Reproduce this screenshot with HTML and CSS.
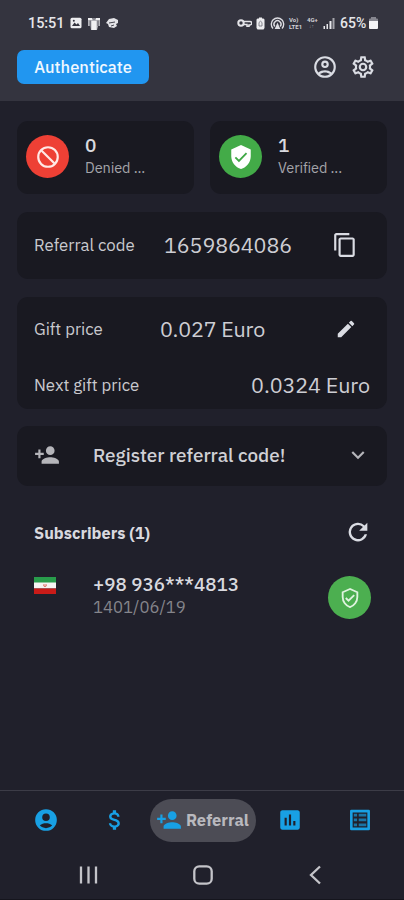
FILE: index.html
```html
<!DOCTYPE html>
<html lang="en">
<head>
<meta charset="utf-8">
<title>Referral</title>
<link rel="stylesheet" href="styles.css">
</head>
<body>
<div class="app">
  <header class="top">
    <div class="status">
      <span class="clock">15:51</span>
      <svg class="st-image" width="12" height="12" viewBox="0 0 12 12"><rect x=".5" y=".8" width="11" height="10.4" rx="1.5" fill="#ededf0"/><path d="M2 9l2.500-3.500 2 2L8 6l2 3z" fill="#33333e"/><circle cx="3.800" cy="3.800" r="1" fill="#33333e"/></svg>
      <svg class="st-shirt" width="14" height="13" viewBox="0 0 14 13"><path d="M1 1h12v8h-2l-1 4H4L3.500 9H1z" fill="#b4b4ba"/><path d="M4.500 4h5v9h-5zM1 1h4v2H1zM9 1h4v2H9z" fill="#f0f0f2"/><path d="M3.200 3.500V9M11 3.500V9M5.500 1L7 2.500 8.500 1" stroke="#50505a" stroke-width=".9" fill="none"/></svg>
      <svg class="st-ball" width="13" height="12" viewBox="0 0 13 12"><path d="M3 2l5-1 4 2v3l-2 1 1 2-3 2-5-1-1-3-2-1z" fill="#e4e4e8"/><path d="M3 6l6-1M5 9l3-1" stroke="#44444e" fill="none"/></svg>
      <span class="spacer"></span>
      <svg class="st-key" width="15" height="10" viewBox="0 0 15 10"><circle cx="4" cy="5" r="2.700" fill="none" stroke="#e4e4e8" stroke-width="2"/><path d="M6.500 3.500h6.500a1.200 1.200 0 0 1 0 3.400h-1v1.300h-2V6.500H7" fill="none" stroke="#e4e4e8" stroke-width="1.500"/></svg>
      <svg class="st-card" width="9" height="13" viewBox="0 0 9 13"><path d="M3 .5h3v1h1.500l1 1V11L7.500 12.500h-6L.5 11V2.500l1-1H3z" fill="#ededf0"/><path d="M3 9V5.500l1.500-1.300L6 5.500V9z" fill="none" stroke="#6a6a75" stroke-width=".8"/></svg>
      <svg class="st-hot" width="15" height="13" viewBox="0 0 15 13"><g fill="none" stroke="#dcdce2" stroke-width="1.400"><path d="M3 11.500a6.200 6.200 0 1 1 9 0"/><path d="M4.800 9.500a3.500 3.500 0 1 1 5.400 0"/></g><path d="M7.500 5.500l2.800 6.500H4.700z" fill="#dcdce2"/></svg>
      <span class="mini volte"><span>Vo)</span><span>LTE1</span></span>
      <span class="mini net"><span>4G+</span><span class="arrows">↓↑</span></span>
      <svg class="st-signal" width="12" height="12" viewBox="0 0 12 12"><path d="M.5 9h1.500v3H.5zM3.500 7H5v5H3.500zM6.500 4h2v8h-2z" fill="#e8e8ec"/><path d="M9.500 1h2v11h-2z" fill="#a4a4ab"/></svg>
      <span class="battery-text">65%</span>
      <svg class="st-batt" width="9" height="12" viewBox="0 0 9 12"><path d="M2 0h5v1.500h1q1 0 1 1V4H0V2.500q0-1 1-1h1z" fill="#86868f"/><path d="M0 4h9v7q0 1-1 1H1q-1 0-1-1z" fill="#f4f4f6"/></svg>
    </div>
    <div class="toolbar">
      <button class="auth">Authenticate</button>
      <span class="spacer"></span>
      <svg class="ic" width="26" height="26" viewBox="0 0 24 24"><path fill-rule="evenodd" d="M12 2a10 10 0 1 0 0 20 10 10 0 0 0 0-20zM7.350 18.500C8.660 17.560 10.260 17 12 17s3.340.56 4.650 1.500A7.960 7.960 0 0 1 12 20c-1.740 0-3.340-.56-4.650-1.500zm10.790-1.380A9.950 9.950 0 0 0 12 15c-2.320 0-4.450.8-6.140 2.120A8 8 0 1 1 20 12c0 1.950-.7 3.730-1.860 5.120zM12 6a3.500 3.500 0 1 0 0 7 3.500 3.500 0 0 0 0-7zm0 5a1.500 1.500 0 1 1 0-3 1.500 1.500 0 0 1 0 3z"/></svg>
      <svg class="ic gear" width="26" height="26" viewBox="0 0 24 24"><path d="M19.430 12.980c.04-.32.070-.64.070-.98s-.03-.66-.07-.98l2.110-1.650c.19-.15.240-.42.120-.64l-2-3.460a.5.5 0 0 0-.61-.22l-2.490 1a7.300 7.300 0 0 0-1.690-.98l-.38-2.650A.49.49 0 0 0 14 2h-4a.49.49 0 0 0-.49.420l-.38 2.650c-.61.250-1.170.59-1.690.98l-2.490-1a.5.5 0 0 0-.61.220l-2 3.460c-.13.220-.07.490.12.640l2.110 1.650c-.04.320-.07.650-.07.980s.03.660.07.980l-2.110 1.650c-.19.150-.24.420-.12.640l2 3.460c.12.220.38.300.61.220l2.490-1c.52.400 1.080.73 1.690.98l.38 2.650c.03.240.24.420.49.420h4c.25 0 .46-.18.49-.42l.38-2.650a7.700 7.700 0 0 0 1.690-.98l2.490 1c.23.090.49 0 .61-.22l2-3.460a.5.500 0 0 0-.12-.64l-2.110-1.650zm-1.980-1.710c.07.520.07.940 0 1.460l-.14 1.130.89.700 1.080.84-.7 1.210-1.270-.51-1.040-.42-.9.680c-.43.320-.84.560-1.250.73l-1.060.43-.16 1.130-.2 1.350h-1.400l-.19-1.350-.16-1.130-1.060-.43c-.43-.18-.83-.41-1.230-.71l-.91-.7-1.060.43-1.270.51-.7-1.210 1.080-.84.89-.7-.14-1.130a5.300 5.300 0 0 1 0-1.480l.14-1.130-.89-.7-1.080-.84.7-1.210 1.270.51 1.040.42.9-.68c.43-.32.84-.56 1.250-.73l1.060-.43.160-1.130.2-1.350h1.390l.19 1.350.16 1.130 1.060.43c.43.180.83.410 1.230.71l.91.700 1.060-.43 1.270-.51.7 1.210-1.070.85-.89.700.14 1.130zM12 8a4 4 0 1 0 0 8 4 4 0 0 0 0-8zm0 6a2 2 0 1 1 0-4 2 2 0 0 1 0 4z" fill-rule="evenodd"/></svg>
    </div>
  </header>

  <main>
    <section class="stats">
      <div class="card stat">
        <span class="disc red"><svg width="26" height="26" viewBox="0 0 24 24" fill="none" stroke="#ffe9e6" stroke-width="2"><circle cx="12" cy="12" r="9"/><path d="M5.700 5.700l12.600 12.600"/></svg></span>
        <div><div class="num">0</div><div class="cap">Denied ...</div></div>
      </div>
      <div class="card stat">
        <span class="disc green"><svg width="26" height="26" viewBox="0 0 24 24"><path d="M12 1L3 5v6c0 5.550 3.840 10.740 9 12 5.160-1.260 9-6.450 9-12V5z" fill="#fff"/><path d="M6.800 12.300l3.300 3.300 7-7.100" fill="none" stroke="#3fa845" stroke-width="1.700"/></svg></span>
        <div><div class="num">1</div><div class="cap">Verified ...</div></div>
      </div>
    </section>

    <section class="card row code">
      <span class="label">Referral code</span>
      <span class="value v-code">1659864086</span>
      <svg class="ic" width="26" height="26" viewBox="0 0 24 24"><path fill-rule="evenodd" d="M16 1H4c-1.100 0-2 .9-2 2v14h2V3h12V1zm3 4H8c-1.100 0-2 .9-2 2v14c0 1.100.9 2 2 2h11c1.100 0 2-.9 2-2V7c0-1.100-.9-2-2-2zm0 16H8V7h11v14z"/></svg>
    </section>

    <section class="card gift">
      <div class="row">
        <span class="label">Gift price</span>
        <span class="value v-gift">0.027 Euro</span>
        <svg class="ic" width="22" height="22" viewBox="0 0 24 24"><path d="M3 17.250V21h3.750L17.810 9.940l-3.750-3.750L3 17.250zM20.710 7.040a1 1 0 0 0 0-1.410l-2.340-2.340a1 1 0 0 0-1.410 0l-1.830 1.830 3.750 3.750 1.830-1.830z"/></svg>
      </div>
      <div class="row next">
        <span class="label">Next gift price</span>
        <span class="value">0.0324 Euro</span>
      </div>
    </section>

    <section class="card row register">
      <svg class="muted" width="26" height="26" viewBox="0 0 24 24"><path d="M15 12a4 4 0 1 0 0-8 4 4 0 0 0 0 8zm-9-2V7H4v3H1v2h3v3h2v-3h3v-2H6zm9 4c-2.670 0-8 1.340-8 4v2h16v-2c0-2.660-5.330-4-8-4z"/></svg>
      <span class="title">Register referral code!</span>
      <svg class="muted" width="26" height="26" viewBox="0 0 24 24"><path d="M16.590 8.590L12 13.170 7.410 8.590 6 10l6 6 6-6z"/></svg>
    </section>

    <section class="subs">
      <div class="subs-head">
        <h2>Subscribers (1)</h2>
        <svg class="ic refresh" width="28" height="28" viewBox="0 0 24 24"><path d="M17.650 6.350A8 8 0 1 0 19.730 14h-2.080A6 6 0 1 1 12 6c1.660 0 3.140.69 4.220 1.780L13 11h7V4l-2.350 2.350z"/></svg>
      </div>
      <div class="sub">
        <svg class="flag" width="22" height="17" viewBox="0 0 22 17"><path d="M0 0h22v6H0z" fill="#289c4b"/><path d="M0 5.500h22v6H0z" fill="#f5f5f3"/><path d="M0 11.500h22V17H0z" fill="#c91b18"/><path d="M9.600 7.300q-.5 2.200 1.400 2.400 1.900-.2 1.400-2.400M11 7v3" fill="none" stroke="#dc6b62" stroke-width=".8"/></svg>
        <div class="who">
          <div class="phone">+98 936***4813</div>
          <div class="date">1401/06/19</div>
        </div>
        <span class="disc green2"><svg width="22" height="22" viewBox="0 0 24 24" fill="none" stroke="#dff3df" stroke-width="2"><path d="M12 2.200L4 5.700V11c0 4.900 3.400 9.600 8 10.900 4.600-1.300 8-6 8-10.900V5.700z"/><path d="M7.400 12l3 3 6.200-6.200"/></svg></span>
      </div>
    </section>
  </main>

  <nav class="tabs">
    <svg width="26" height="26" viewBox="0 0 24 24"><path fill-rule="evenodd" d="M12 2a10 10 0 1 0 0 20 10 10 0 0 0 0-20zm0 4a3.500 3.500 0 1 1 0 7 3.500 3.500 0 0 1 0-7zm0 13.500c-2.300 0-4.400-1-5.700-2.600 1.600-1.300 3.600-1.900 5.700-1.900s4.100.6 5.700 1.900c-1.300 1.600-3.400 2.600-5.700 2.600z"/></svg>
    <svg class="t-money" width="26" height="26" viewBox="0 0 24 24"><path d="M11.800 10.900c-2.270-.59-3-1.200-3-2.150 0-1.090 1.010-1.850 2.700-1.850 1.780 0 2.440.85 2.500 2.100h2.210c-.07-1.720-1.120-3.300-3.210-3.810V3h-3v2.160c-1.940.42-3.500 1.680-3.500 3.610 0 2.310 1.910 3.460 4.700 4.130 2.500.6 3 1.480 3 2.410 0 .69-.49 1.790-2.700 1.790-2.060 0-2.870-.92-2.980-2.100h-2.200c.12 2.190 1.760 3.420 3.680 3.830V21h3v-2.150c1.950-.37 3.500-1.500 3.500-3.550 0-2.840-2.430-3.810-4.700-4.400z"/></svg>
    <div class="pill">
      <svg width="26" height="26" viewBox="0 0 24 24"><path d="M15 12a4 4 0 1 0 0-8 4 4 0 0 0 0 8zm-9-2V7H4v3H1v2h3v3h2v-3h3v-2H6zm9 4c-2.670 0-8 1.340-8 4v2h16v-2c0-2.660-5.330-4-8-4z"/></svg>
      <span>Referral</span>
    </div>
    <svg class="t-chart" width="26" height="26" viewBox="0 0 24 24"><path fill-rule="evenodd" d="M19 3H5c-1.100 0-2 .9-2 2v14c0 1.100.9 2 2 2h14c1.100 0 2-.9 2-2V5c0-1.100-.9-2-2-2zM9 17H7v-7h2v7zm4 0h-2V7h2v10zm4 0h-2v-4h2v4z"/></svg>
    <svg class="t-list" width="26" height="26" viewBox="0 0 24 24"><path fill-rule="evenodd" d="M4 2.500h16q1.200 0 1.200 1.200v16.600q0 1.200-1.200 1.200H4q-1.200 0-1.200-1.200V3.700Q2.800 2.500 4 2.500zM5.200 5v14h13.600V5z"/><path d="M6.300 6.200h3v2.500h-3zM10.800 6.200h7v2.500h-7zM6.300 10.700h3v2.500h-3zM10.800 10.700h7v2.500h-7zM6.300 15.200h3v2.500h-3zM10.800 15.200h7v2.500h-7z" opacity=".65"/></svg>
  </nav>

  <footer class="system">
    <svg width="20" height="20" viewBox="0 0 20 20"><path d="M2 1.500v17M9.500 1.500v17M17 1.500v17"/></svg>
    <svg width="20" height="20" viewBox="0 0 20 20"><rect x="1.300" y="1.300" width="17.400" height="17.400" rx="5"/></svg>
    <svg width="20" height="20" viewBox="0 0 20 20"><path d="M14 1.500L5 10l9 8.500"/></svg>
  </footer>
</div>
</body>
</html>
```
FILE: styles.css
```css
* { box-sizing: border-box; }
body { margin: 0; background: #20202b; color: #d9d9df; font-family: "IBM Plex Sans", Roboto, sans-serif; }
svg { display: block; flex: none; }
.app { display: flex; flex-direction: column; width: 404px; height: 900px; background: #20202b; overflow: hidden; white-space: nowrap; border-bottom: 1px solid #15151d; }
.spacer { flex: 1; }
.ic { fill: #dadce3; }
.muted { fill: #b5b5ba; }

.top { height: 101px; background: #34343f; flex: none; }
.status { display: flex; align-items: center; height: 46px; padding: 0 26px 0 28px; font: 500 14px Roboto, sans-serif; color: #e6e6ea; }
.clock { width: 42px; font-size: 14.500px; letter-spacing: -.1px; }
.st-shirt { margin-left: 5px; }
.st-ball { margin-left: 5px; }
.st-card { margin-left: 4px; }
.st-hot { margin-left: 5px; }
.mini { display: flex; flex-direction: column; gap: 0; font-size: 6px; line-height: 7px; font-weight: 700; margin-left: 4px; color: #d2d2d8; }
.volte { width: 15px; }
.net { width: 12px; margin-left: 3px; }
.arrows { color: #8c8c94; padding-left: 2px; font-size: 5px; }
.st-signal { margin-left: 4px; }
.battery-text { margin-left: 5px; width: 29px; }
.toolbar { display: flex; align-items: center; height: 42px; padding: 0 28px 0 17px; }
.auth { width: 132px; height: 34px; padding: 0; border: 0; border-radius: 7px; background: #2196f0; color: #f0f8ff; font: 500 16.500px "IBM Plex Sans", Roboto, sans-serif; }
.gear { margin-left: 12px; }

main { flex: 1; padding: 20px 17px 0; display: flex; flex-direction: column; }
.card { background: #191921; border-radius: 11px; }
.stats { display: grid; grid-template-columns: 177px 177px; justify-content: space-between; height: 73px; }
.stat { display: flex; padding: 14px 8px 14px 9px; gap: 16px; }
.disc { display: flex; align-items: center; justify-content: center; width: 43px; height: 43px; border-radius: 50%; flex: none; }
.red { background: #ee4035; }
.green { background: #43ab48; }
.green2 { background: #4caf50; }
.num { font-size: 19px; line-height: 22px; font-weight: 500; margin-top: -1px; }
.cap { font-size: 14.500px; line-height: 22px; color: #a4a4a9; margin-top: 1px; letter-spacing: -.1px; }

.row { display: flex; align-items: center; padding: 0 17px; }
.label { font-size: 16.800px; color: #c9c9ce; }
.value { font-size: 21.500px; letter-spacing: -.1px; color: #cdcdd3; }
.code { height: 67px; margin-top: 18px; padding-right: 29px; padding-bottom: 2px; }
.v-code { margin-left: auto; margin-right: 40px; }
.gift { height: 112px; margin-top: 18px; }
.gift .row { height: 64px; padding-right: 30px; }
.v-gift { margin-left: auto; margin-right: 70px; letter-spacing: -.2px; }
.gift .next { height: 48px; padding-right: 17px; padding-bottom: 1px; justify-content: space-between; }
.register { height: 60px; margin-top: 17px; padding-right: 16px; padding-bottom: 3px; }
.title { margin-left: 33px; margin-right: auto; font-size: 18.900px; font-weight: 500; color: #d0d0d5; }

.subs { padding: 0 16px 0 17px; margin-top: 28px; }
.subs-head { display: flex; align-items: center; justify-content: space-between; height: 36px; }
.refresh { margin-right: -1px; }
h2 { margin: 0; font-size: 16.300px; font-weight: 700; }
.sub { display: flex; height: 44px; margin-top: 26px; }
.flag { margin-top: 1px; }
.who { margin-left: 37px; flex: 1; }
.phone { font-size: 18.800px; line-height: 22px; margin-top: -3px; font-weight: 500; }
.date { font-size: 16.700px; line-height: 22px; margin-top: 1px; color: #85858b; }

.tabs { display: flex; align-items: center; height: 61px; border-top: 1px solid #3c3c47; fill: #18a0e4; padding: 0 31px 2px 33px; flex: none; }
.t-money { margin-left: 43px; }
.pill { display: flex; align-items: center; width: 106px; height: 43px; margin-left: 22px; border-radius: 22px; background: #4c4c55; padding-left: 6px; gap: 4px; font-size: 16.500px; font-weight: 700; color: #b9b9be; }
.t-chart { margin-left: 21px; }
.t-list { margin-left: 44px; }
.system { display: flex; align-items: center; justify-content: space-between; height: 48px; padding: 0 78px 0 79px; fill: none; stroke: #c4c4c9; stroke-width: 2.300; flex: none; }
```
